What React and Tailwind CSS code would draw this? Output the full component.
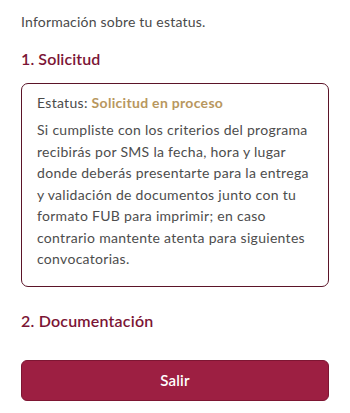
import React from "react";

const lineas = [
  "Si cumpliste con los criterios del programa",
  "recibirás por SMS la fecha, hora y lugar",
  "donde deberás presentarte para la entrega",
  "y validación de documentos junto con tu",
  "formato FUB para imprimir; en caso",
  "contrario mantente atenta para siguientes",
  "convocatorias.",
];

export default function App() {
  return (
    <div
      className="w-[350px] h-[413px] bg-white px-[21px] pt-[12px]"
      style={{ fontFamily: "Lato, 'Noto Sans', sans-serif" }}
    >
      <p className="text-[14px] leading-[20px] tracking-[0.2px] text-[#4a4a4a]">
        Información sobre tu estatus.
      </p>

      <h2 className="mt-[16px] text-[16px] leading-[22px] font-semibold tracking-[0.1px] text-[#7b1535]">
        1. Solicitud
      </h2>

      <div className="mt-[13px] rounded-[7px] border-[1.5px] border-[#5b1428] px-[15px] pt-[9px] pb-[16px]">
        <p className="text-[14px] leading-[20px] tracking-[0.3px] text-[#4a4a4a]">
          Estatus:{" "}
          <span className="font-bold text-[#b8975e]">Solicitud en proceso</span>
        </p>
        <p className="mt-[6px] text-[14px] leading-[21.5px] tracking-[0.3px] text-[#4d4d4d]">
          {lineas.map((l) => (
            <span key={l} className="block whitespace-nowrap">
              {l}
            </span>
          ))}
        </p>
      </div>

      <h2 className="mt-[23px] text-[16px] leading-[22px] font-semibold tracking-[0.2px] text-[#7b1535]">
        2. Documentación
      </h2>

      <button className="mt-[28px] w-full h-[41px] rounded-[6px] bg-[#9d1f42] border border-[#7e1633] text-white text-[15px] font-semibold tracking-[0.2px]">
        Salir
      </button>
    </div>
  );
}
